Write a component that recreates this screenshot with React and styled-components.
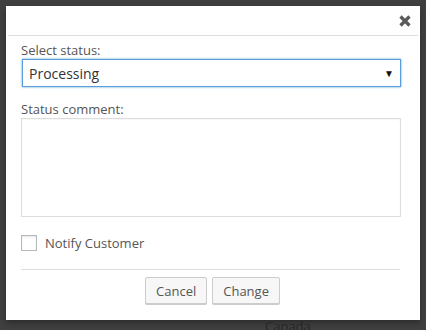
import React from "react";
import styled, { createGlobalStyle } from "styled-components";

const GlobalStyle = createGlobalStyle`
  html, body {
    margin: 0;
    padding: 0;
    background: #3f3f3f;
  }
  body {
    font-family: "Open Sans", "Liberation Sans", sans-serif;
    color: #444;
  }
`;

const Backdrop = styled.div`
  width: 426px;
  height: 330px;
  overflow: hidden;
  background: #3f3f3f;
  padding: 6px 6px 0 6px;
  box-sizing: border-box;
`;

const Dialog = styled.div`
  width: 414px;
  height: 314px;
  background: #fff;
  box-shadow: 0 3px 6px rgba(0, 0, 0, 0.3);
  display: flex;
  flex-direction: column;
  box-sizing: border-box;
`;

const Header = styled.div`
  height: 30px;
  margin: 0 2px;
  border-bottom: 1px solid #ddd;
  box-sizing: border-box;
  display: flex;
  align-items: center;
  justify-content: flex-end;
  padding-right: 7px;
`;

const CloseButton = styled.button`
  border: 0;
  background: none;
  padding: 0;
  width: 12px;
  height: 12px;
  display: flex;
  cursor: pointer;
`;

const Body = styled.div`
  padding: 5px 19px 0 15px;
  display: flex;
  flex-direction: column;
`;

const Label = styled.div`
  font-size: 13px;
  line-height: 18px;
  color: #555;
  margin-top: ${({ $gap }) => $gap || 0}px;
`;

const SelectBox = styled.div`
  height: 28px;
  margin-left: 1px;
  border: 1px solid #5b9dd9;
  box-shadow: 0 0 2px rgba(30, 140, 190, 0.8);
  box-sizing: border-box;
  display: flex;
  align-items: center;
  padding: 0 6px 0 6px;
  font-size: 14px;
  color: #333;
`;

const SelectValue = styled.span`
  flex: 1;
`;

const Caret = styled.span`
  font-size: 10px;
  line-height: 10px;
  color: #111;
`;

const TextArea = styled.textarea`
  display: block;
  height: 99px;
  width: 100%;
  border: 1px solid #ddd;
  box-sizing: border-box;
  resize: none;
  outline: none;
  font-family: inherit;
  box-shadow: inset 0 1px 2px rgba(0, 0, 0, 0.04);
`;

const CheckRow = styled.label`
  display: flex;
  align-items: center;
  gap: 8px;
  margin-top: 17px;
  font-size: 13px;
  line-height: 18px;
  color: #555;
`;

const CheckBox = styled.span`
  width: 16px;
  height: 16px;
  border: 1px solid #b4b9be;
  box-sizing: border-box;
  background: #fff;
  box-shadow: inset 0 1px 2px rgba(0, 0, 0, 0.1);
`;

const Divider = styled.hr`
  border: 0;
  border-top: 1px solid #ddd;
  margin: 17px 1px 0 0;
`;

const Actions = styled.div`
  display: flex;
  justify-content: center;
  gap: 5px;
  margin-top: 7px;
  padding-left: 3px;
`;

const Button = styled.button`
  height: 27px;
  padding: 0 10px;
  border: 1px solid #ccc;
  border-radius: 2px;
  background: #f7f7f7;
  box-shadow: 0 1px 0 #ccc;
  font-family: inherit;
  font-size: 13px;
  color: #555;
  cursor: pointer;
`;

const PageBehind = styled.div`
  padding-left: 259px;
  font-size: 13px;
  line-height: 18px;
  color: #262626;
  margin-top: -3px;
`;

const CloseIcon = () => (
  <svg width="12" height="12" viewBox="0 0 12 12">
    <path d="M1.5 1.5 L10.5 10.5 M10.5 1.5 L1.5 10.5" stroke="#5a5a5a" strokeWidth="3.2" strokeLinecap="butt" />
  </svg>
);

export default function App() {
  return (
    <>
      <GlobalStyle />
      <Backdrop>
        <Dialog>
          <Header>
            <CloseButton aria-label="Close">
              <CloseIcon />
            </CloseButton>
          </Header>
          <Body>
            <Label>Select status:</Label>
            <SelectBox>
              <SelectValue>Processing</SelectValue>
              <Caret>▼</Caret>
            </SelectBox>
            <Label $gap={13}>Status comment:</Label>
            <TextArea />
            <CheckRow>
              <CheckBox />
              Notify Customer
            </CheckRow>
            <Divider />
            <Actions>
              <Button>Cancel</Button>
              <Button>Change</Button>
            </Actions>
          </Body>
        </Dialog>
        <PageBehind>Canada</PageBehind>
      </Backdrop>
    </>
  );
}
